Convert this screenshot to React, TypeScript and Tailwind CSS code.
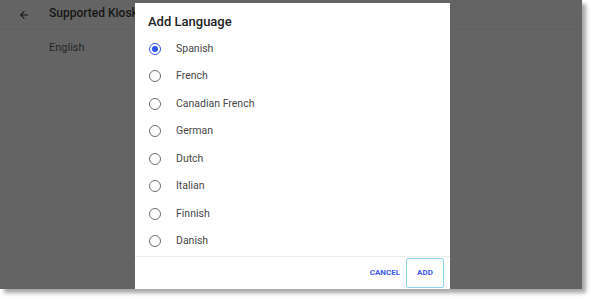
import React from "react";

const langs = ["Spanish", "French", "Canadian French", "German", "Dutch", "Italian", "Finnish", "Danish"];

function Radio({ checked }: { checked: boolean }) {
  return (
    <div
      className={
        "w-[12px] h-[12px] rounded-full border-[1.5px] flex items-center justify-center shrink-0 " +
        (checked ? "border-[#2f55f0]" : "border-[#6e6e6e]")
      }
    >
      {checked && <div className="w-[6px] h-[6px] rounded-full bg-[#2f55f0]" />}
    </div>
  );
}

export default function App() {
  return (
    <div className="w-[591px] h-[299px] bg-white" style={{ fontFamily: "Roboto, 'Liberation Sans', sans-serif" }}>
      <div className="relative w-[582px] h-[289px] bg-[#646464] shadow-[4px_4px_4px_rgba(0,0,0,0.35)]">
        <div className="h-[30px] flex items-center border-b border-[#606060]">
          <svg className="ml-[18px] w-[12px] h-[12px]" viewBox="0 0 24 24" fill="#141414">
            <path d="M20 11H7.83l5.59-5.59L12 4l-8 8 8 8 1.41-1.41L7.83 13H20v-2z" />
          </svg>
          <span className="ml-[19px] w-[86px] overflow-hidden whitespace-nowrap text-[12px] font-medium text-[#161616] -mt-[4px]">
            Supported Kiosk
          </span>
        </div>
        <div className="pl-[49px] pt-[10px] text-[11px] text-[#262626]">English</div>

        <div className="absolute left-[135px] top-[3px] w-[315px] h-[286px] bg-white flex flex-col">
          <div className="pl-[13px] pt-[11px] text-[13px] leading-[16px] font-medium text-[#222]">Add Language</div>
          <div className="pt-[5px] flex flex-col">
            {langs.map((l, i) => (
              <div key={l} className="h-[27.5px] flex items-center pl-[14px]">
                <Radio checked={i === 0} />
                <span className="ml-[15px] text-[10.5px] text-[#474747]">{l}</span>
              </div>
            ))}
          </div>
          <div className="mt-[1px] border-t border-[#ececec] flex-1 flex items-center justify-end pr-[6px]">
            <span className="text-[8px] font-bold text-[#3f5be6] mr-[6px]">CANCEL</span>
            <div className="w-[38px] h-[30px] border-[1.5px] border-[#8fd4ef] rounded-[2px] flex items-center justify-center">
              <span className="text-[8px] font-bold text-[#3f5be6]">ADD</span>
            </div>
          </div>
        </div>
      </div>
    </div>
  );
}
